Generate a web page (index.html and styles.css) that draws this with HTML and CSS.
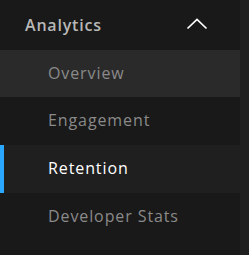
FILE: index.html
```html
<!DOCTYPE html>
<html lang="en">
<head>
  <meta charset="UTF-8" />
  <title>Analytics</title>
  <link rel="stylesheet" href="styles.css">
</head>
<body>
  <nav class="sidebar">
    <div class="section-head">
      <span class="section-title">Analytics</span>
      <svg class="chevron" width="22" height="12" viewBox="0 0 22 12">
        <path d="M1.5 10.5 L11 1.5 L20.5 10.5" fill="none" stroke="#fff" stroke-width="1.7"/>
      </svg>
    </div>
    <a class="nav-item hover">Overview</a>
    <a class="nav-item">Engagement</a>
    <a class="nav-item active">Retention</a>
    <a class="nav-item">Developer Stats</a>
  </nav>
</body>
</html>
```

FILE: styles.css
```css
body {
  margin: 0;
  background: #1f1f1f;
  font-family: 'Open Sans', sans-serif;
  height: 255px;
  overflow: hidden;
}
.sidebar {
  width: 240px;
  height: 255px;
  background: #191919;
}
.section-head {
  height: 50px;
  display: flex;
  align-items: center;
  justify-content: space-between;
  padding: 0 32px 0 25px;
}
.section-title {
  color: #b8b8b8;
  font-size: 16px;
  font-weight: 600;
  letter-spacing: 0.8px;
  margin-top: -1px;
}
.chevron {
  margin-top: -3px;
}
.nav-item {
  display: block;
  height: 48px;
  line-height: 47px;
  padding-left: 48px;
  font-size: 16px;
  letter-spacing: 0.9px;
  color: #8a8a8a;
  box-sizing: border-box;
}
.nav-item.hover {
  background: #2a2a2a;
  height: 47px;
}
.nav-item.active {
  background: #1f1f1f;
  color: #fff;
  border-left: 4px solid #2aa8ff;
  padding-left: 44px;
}
```
